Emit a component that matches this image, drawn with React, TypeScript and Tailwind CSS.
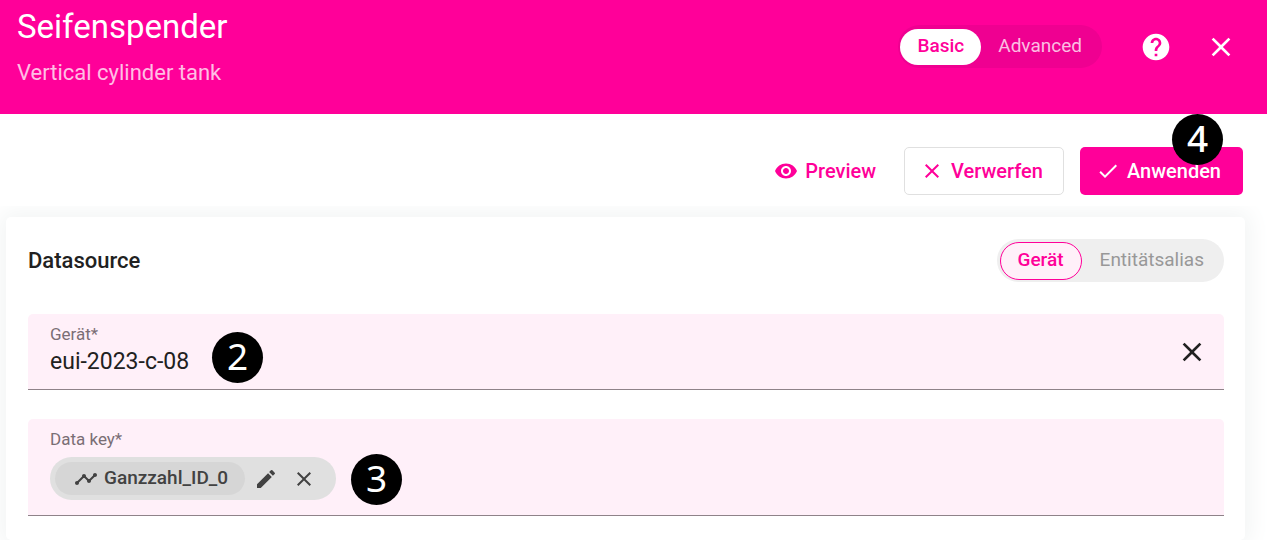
import { useState } from "react";
import type { ReactNode } from "react";
import {
  MdCheck,
  MdClose,
  MdEdit,
  MdHelp,
  MdTimeline,
  MdVisibility,
} from "react-icons/md";

function StepBadge({ step, className }: { step: number; className: string }) {
  return (
    <span
      className={`absolute flex size-[51px] items-center justify-center rounded-full bg-black pb-1 font-['Noto_Sans',sans-serif] text-[37px] leading-none text-white ${className}`}
    >
      {step}
    </span>
  );
}

function ModeSwitch() {
  const [mode, setMode] = useState("Basic");
  return (
    <div className="flex h-[43px] items-center rounded-full bg-[#ef0091] pr-[3px] pl-0.5">
      {["Basic", "Advanced"].map((item) => (
        <button
          key={item}
          type="button"
          aria-pressed={mode === item}
          onClick={() => setMode(item)}
          className={`h-9 rounded-full px-[17px] text-[19px] ${
            mode === item ? "bg-white font-medium text-[#ff0099]" : "text-white/75"
          }`}
        >
          {item}
        </button>
      ))}
    </div>
  );
}

function SourceSwitch() {
  const [source, setSource] = useState("Gerät");
  return (
    <div className="flex h-[43px] items-center rounded-full bg-[#efefef] pr-0.5 pl-[3px]">
      {["Gerät", "Entitätsalias"].map((item) => (
        <button
          key={item}
          type="button"
          aria-pressed={source === item}
          onClick={() => setSource(item)}
          className={`h-[38px] rounded-full border px-[17px] text-[19px] ${
            source === item
              ? "border-[#ff0099] bg-[#fff0f9] font-medium text-[#ff0099]"
              : "border-transparent text-[#989898]"
          }`}
        >
          {item}
        </button>
      ))}
    </div>
  );
}

function Field({ children }: { children: ReactNode }) {
  return (
    <div className="relative rounded-t-[5px] border-b border-[#8f8289] bg-[#fff0f9] px-[22px]">
      {children}
    </div>
  );
}

export default function App() {
  const [device, setDevice] = useState("eui-2023-c-08");
  return (
    <div className="flex h-screen flex-col overflow-hidden bg-white font-[Roboto,sans-serif] text-[#212121]">
      <header className="flex justify-between bg-[#ff0099] pr-[30px] pb-[27px] pl-[17px] text-white">
        <div className="pt-[7px]">
          <h1 className="text-[33px] leading-10">Seifenspender</h1>
          <p className="pt-3 text-[22px] leading-7 text-white/75">Vertical cylinder tank</p>
        </div>
        <div className="flex items-center pt-[25px] pb-[19px]">
          <ModeSwitch />
          <button type="button" aria-label="Help" className="ml-[38px]">
            <MdHelp className="size-8" />
          </button>
          <button type="button" aria-label="Close" className="ml-[33px]">
            <MdClose className="size-8" />
          </button>
        </div>
      </header>

      <div className="flex items-center justify-end gap-4 pt-[33px] pr-6 pb-[11px] text-[20px] font-medium text-[#ff0099]">
        <button type="button" className="flex h-12 items-center gap-[7px] px-3">
          <MdVisibility className="size-6" />
          Preview
        </button>
        <button
          type="button"
          className="flex h-12 items-center gap-[7px] rounded-[5px] border border-[#e0e0e0] pr-5 pl-[15px]"
        >
          <MdClose className="size-6" />
          Verwerfen
        </button>
        <button
          type="button"
          className="relative flex h-12 items-center gap-[7px] rounded-[5px] bg-[#ff0099] pr-[22px] pl-4 text-white"
        >
          <MdCheck className="size-6" />
          Anwenden
          <StepBadge step={4} className="-top-[33px] right-5" />
        </button>
      </div>

      <main className="flex min-h-0 flex-1 flex-col overflow-hidden pt-[11px] pr-[22px] pl-1.5">
        <section className="flex-1 rounded-[5px] bg-white pt-[22px] pr-[21px] pl-[22px] shadow-[0_0_22px_6px_#f3f5f5]">
          <div className="flex items-center justify-between">
            <h2 className="text-[22px] font-medium">Datasource</h2>
            <SourceSwitch />
          </div>

          <div className="flex flex-col gap-[29px] pt-8">
            <Field>
              <div className="flex h-[75px] items-center">
                <div className="flex-1 pb-[3px]">
                  <label htmlFor="device" className="block text-[17px] leading-6 text-[#7a6e75]">
                    Gerät*
                  </label>
                  <input
                    id="device"
                    value={device}
                    onChange={(event) => setDevice(event.target.value)}
                    className="block w-full bg-transparent text-[23px] leading-8 outline-none"
                  />
                </div>
                <button type="button" aria-label="Clear" onClick={() => setDevice("")} className="-mr-1.5">
                  <MdClose className="size-8" />
                </button>
              </div>
              <StepBadge step={2} className="top-[18px] left-[184px]" />
            </Field>

            <Field>
              <div className="pt-2 pb-[15px]">
                <p className="pb-1.5 text-[17px] leading-6 text-[#7a6e75]">Data key*</p>
                <div className="flex h-[43px] w-fit items-center rounded-full bg-[#e0e0e0] pr-5 pl-[5px] text-[#424242]">
                  <span className="flex h-[33px] items-center gap-1.5 rounded-full bg-[#d6d6d6] pr-[17px] pl-[19px] text-[19px] font-medium">
                    <MdTimeline className="size-6" />
                    Ganzzahl_ID_0
                  </span>
                  <button type="button" aria-label="Edit key" className="ml-[9px]">
                    <MdEdit className="size-6" />
                  </button>
                  <button type="button" aria-label="Remove key" className="ml-3.5">
                    <MdClose className="size-6" />
                  </button>
                </div>
              </div>
              <StepBadge step={3} className="top-[35px] left-[323px]" />
            </Field>
          </div>
        </section>
      </main>
    </div>
  );
}
